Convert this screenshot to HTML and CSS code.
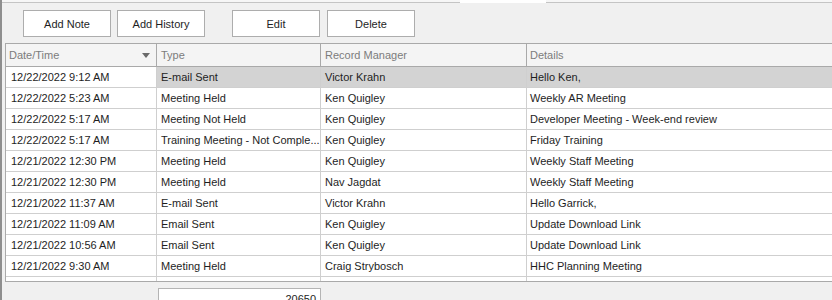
FILE: index.html
```html
<!DOCTYPE html>
<html>
<head>
<meta charset="utf-8">
<link rel="stylesheet" href="styles.css">
</head>
<body>
<div class="frame">
  <div class="tabstrip"><span class="tab-gap"></span><span class="tab-active"></span></div>
  <div class="toolbar">
    <button class="btn">Add Note</button>
    <button class="btn">Add History</button>
    <button class="btn btn-far">Edit</button>
    <button class="btn btn-last">Delete</button>
  </div>
  <div class="grid">
    <div class="row head">
      <div class="cell c1">Date/Time<span class="sort"></span></div>
      <div class="cell c2">Type</div>
      <div class="cell c3">Record Manager</div>
      <div class="cell c4">Details</div>
    </div>
    <div class="row selected">
      <div class="cell c1 focus">12/22/2022 9:12 AM</div>
      <div class="cell c2">E-mail Sent</div>
      <div class="cell c3">Victor Krahn</div>
      <div class="cell c4">Hello Ken,</div>
    </div>
    <div class="row">
      <div class="cell c1">12/22/2022 5:23 AM</div>
      <div class="cell c2">Meeting Held</div>
      <div class="cell c3">Ken Quigley</div>
      <div class="cell c4">Weekly AR Meeting</div>
    </div>
    <div class="row">
      <div class="cell c1">12/22/2022 5:17 AM</div>
      <div class="cell c2">Meeting Not Held</div>
      <div class="cell c3">Ken Quigley</div>
      <div class="cell c4">Developer Meeting - Week-end review</div>
    </div>
    <div class="row">
      <div class="cell c1">12/22/2022 5:17 AM</div>
      <div class="cell c2">Training Meeting - Not Comple...</div>
      <div class="cell c3">Ken Quigley</div>
      <div class="cell c4">Friday Training</div>
    </div>
    <div class="row">
      <div class="cell c1">12/21/2022 12:30 PM</div>
      <div class="cell c2">Meeting Held</div>
      <div class="cell c3">Ken Quigley</div>
      <div class="cell c4">Weekly Staff Meeting</div>
    </div>
    <div class="row">
      <div class="cell c1">12/21/2022 12:30 PM</div>
      <div class="cell c2">Meeting Held</div>
      <div class="cell c3">Nav Jagdat</div>
      <div class="cell c4">Weekly Staff Meeting</div>
    </div>
    <div class="row">
      <div class="cell c1">12/21/2022 11:37 AM</div>
      <div class="cell c2">E-mail Sent</div>
      <div class="cell c3">Victor Krahn</div>
      <div class="cell c4">Hello Garrick,</div>
    </div>
    <div class="row">
      <div class="cell c1">12/21/2022 11:09 AM</div>
      <div class="cell c2">Email Sent</div>
      <div class="cell c3">Ken Quigley</div>
      <div class="cell c4">Update Download Link</div>
    </div>
    <div class="row">
      <div class="cell c1">12/21/2022 10:56 AM</div>
      <div class="cell c2">Email Sent</div>
      <div class="cell c3">Ken Quigley</div>
      <div class="cell c4">Update Download Link</div>
    </div>
    <div class="row">
      <div class="cell c1">12/21/2022 9:30 AM</div>
      <div class="cell c2">Meeting Held</div>
      <div class="cell c3">Craig Strybosch</div>
      <div class="cell c4">HHC Planning Meeting</div>
    </div>
    <div class="row filler">
      <div class="cell c1"></div>
      <div class="cell c2"></div>
      <div class="cell c3"></div>
      <div class="cell c4"></div>
    </div>
  </div>
  <div class="footer">
    <div class="total">20650</div>
  </div>
</div>
</body>
</html>
```
FILE: styles.css
```css
* { box-sizing: border-box; }
html, body {
  margin: 0;
  padding: 0;
  background: #f0f0f0;
  width: 832px;
  height: 300px;
  overflow: hidden;
  font-family: "Liberation Sans", Arial, sans-serif;
  font-size: 11px;
  color: #1e1e1e;
}
.frame {
  height: 300px;
  border-left: 2px solid #8e8e8e;
  display: flex;
  flex-direction: column;
}
.tabstrip {
  height: 3px;
  background: #f6f6f6;
  border-bottom: 1px solid #c4c4c4;
  display: flex;
  flex: none;
}
.tab-gap { width: 458px; }
.tab-active {
  width: 86px;
  height: 3px;
  background: #ffffff;
}
.toolbar {
  display: flex;
  gap: 6px;
  padding-left: 21px;
  margin-top: 7px;
  flex: none;
}
.btn {
  width: 88px;
  height: 27px;
  background: #ffffff;
  border: 1px solid #adadad;
  font-family: "Liberation Sans", Arial, sans-serif;
  font-size: 11px;
  color: #1e1e1e;
  padding: 0;
  margin: 0;
}
.btn-far { margin-left: 21px; }
.btn-last { margin-left: 1px; }
.grid {
  margin-top: 6px;
  margin-left: 3px;
  border-top: 1px solid #a9a9a9;
  border-left: 1px solid #a9a9a9;
  border-bottom: 1px solid #a9a9a9;
  background: #ffffff;
  flex: none;
}
.row {
  display: flex;
  height: 21px;
}
.cell {
  height: 100%;
  border-right: 1px solid #cfcfcf;
  border-bottom: 1px solid #cfcfcf;
  padding-left: 4px;
  line-height: 20px;
  white-space: nowrap;
  overflow: hidden;
  flex: none;
}
.c1 { width: 151px; padding-left: 5px; }
.c2 { width: 164px; }
.c3 { width: 206px; }
.c4 { flex: 1; border-right: none; padding-left: 3px; }
.head { height: 23px; background: #f4f4f4; }
.head .cell {
  color: #7c7c7c;
  line-height: 22px;
  border-bottom-color: #a9a9a9;
  border-right-color: #a9a9a9;
}
.head .c1 { padding-left: 3px; display: flex; justify-content: space-between; padding-right: 6px; }
.sort {
  width: 0;
  height: 0;
  border-left: 4px solid transparent;
  border-right: 4px solid transparent;
  border-top: 5px solid #6a6a6a;
  margin-top: 9px;
}
.selected .cell { background: #d3d3d3; }
.selected .cell.focus { background: #ffffff; }
.filler { height: 4px; }
.filler .cell { border-bottom: none; }
.footer {
  padding-left: 156px;
  margin-top: 6px;
}
.total {
  width: 163px;
  height: 21px;
  background: #ffffff;
  border: 1px solid #b4b4b4;
  text-align: right;
  padding-right: 4px;
  padding-top: 4px;
  line-height: 13px;
  color: #1e1e1e;
}
```
